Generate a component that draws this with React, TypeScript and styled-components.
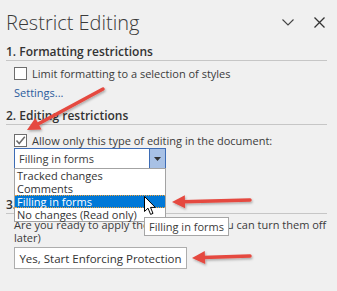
import styled, { createGlobalStyle } from 'styled-components';

const GlobalStyle = createGlobalStyle`
  html, body { margin: 0; padding: 0; background: #f0f0f0; }
`;

const Panel = styled.div`
  position: relative;
  width: 337px;
  height: 291px;
  overflow: hidden;
  background: #f0f0f0;
  color: #3b3b3b;
  font-family: "Open Sans", "Noto Sans", sans-serif;
  font-size: 11px;
`;

const Header = styled.header`
  display: flex;
  align-items: center;
  height: 44px;
  padding: 0 8px 0 6px;
`;

const Title = styled.h1`
  flex: 1;
  margin: 2px 0 0;
  font-size: 20px;
  font-weight: 300;
  line-height: 24px;
  color: #3a3a3a;
`;

const HeaderButton = styled.button`
  display: flex;
  align-items: center;
  justify-content: center;
  width: 20px;
  height: 20px;
  margin-left: 11px;
  padding: 0;
  border: 0;
  background: none;
  color: #444;
`;

const Section = styled.section<{ $gap?: number }>`
  padding: 0 10px 0 6px;
  margin-top: ${({ $gap }) => $gap ?? 0}px;
`;

const SectionTitle = styled.h2`
  margin: 0;
  font-size: 12px;
  font-weight: 600;
  line-height: 16px;
  color: #333;
  border-bottom: 1px solid #c6c6c6;
`;

const OptionRow = styled.label<{ $top: number; $height: number }>`
  display: flex;
  align-items: center;
  gap: 5px;
  height: ${({ $height }) => $height}px;
  margin-top: ${({ $top }) => $top}px;
  padding-left: 8px;
  white-space: nowrap;
`;

const Box = styled.span`
  display: flex;
  align-items: center;
  justify-content: center;
  box-sizing: border-box;
  width: 13px;
  height: 13px;
  border: 1px solid #6d6d6d;
  background: #fff;
`;

const Link = styled.a`
  display: block;
  padding-left: 8px;
  line-height: 16px;
  color: #2b5b9c;
  text-decoration: none;
`;

const Select = styled.div`
  position: relative;
  display: flex;
  box-sizing: border-box;
  width: 152px;
  height: 21px;
  margin: 1px 0 0 8px;
  border: 1px solid #3d6cb5;
  background: #fff;
`;

const SelectValue = styled.span`
  flex: 1;
  padding-left: 4px;
  line-height: 19px;
`;

const SelectButton = styled.span`
  display: flex;
  align-items: center;
  justify-content: center;
  width: 15px;
  border-left: 1px solid #3d6cb5;
  background: #a8c1e5;
`;

const List = styled.ul`
  position: absolute;
  top: 100%;
  left: -1px;
  z-index: 2;
  box-sizing: border-box;
  width: 152px;
  margin: 0;
  padding: 0;
  list-style: none;
  border: 1px solid #a3a3a3;
  background: #fff;
`;

const Item = styled.li<{ $active?: boolean }>`
  box-sizing: border-box;
  height: 13px;
  padding-left: 2px;
  line-height: 12px;
  white-space: nowrap;
  color: ${({ $active }) => ($active ? '#fff' : '#333')};
  background: ${({ $active }) => ($active ? '#0078d7' : 'transparent')};
  border: 1px ${({ $active }) => ($active ? 'dotted #f2a33a' : 'solid transparent')};
  border-left: 0;
  border-right: 0;
`;

const Paragraph = styled.p`
  margin: 4px 0 0;
  padding-left: 8px;
  line-height: 13px;
`;

const ActionButton = styled.button`
  display: block;
  box-sizing: border-box;
  width: 173px;
  height: 22px;
  margin: 3px 0 0 8px;
  padding: 0;
  border: 1px solid #adadad;
  background: #fff;
  color: #333;
  font: inherit;
  font-size: 11.5px;
`;

const Tooltip = styled.div`
  position: absolute;
  left: 144px;
  top: 217px;
  z-index: 3;
  box-sizing: border-box;
  width: 85px;
  height: 19px;
  padding-left: 4px;
  border: 1px solid #a6a6a6;
  background: #fff;
  line-height: 17px;
  white-space: nowrap;
`;

const Pointer = styled.svg`
  position: absolute;
  left: 144px;
  top: 196px;
  z-index: 4;
`;

const Marks = styled.svg`
  position: absolute;
  inset: 0;
  z-index: 5;
  pointer-events: none;
`;

function Arrow({ x1, y1, x2, y2 }: { x1: number; y1: number; x2: number; y2: number }) {
  const a = Math.atan2(y2 - y1, x2 - x1);
  const len = 13;
  const half = 6.5;
  const bx = x2 - Math.cos(a) * len;
  const by = y2 - Math.sin(a) * len;
  const px = -Math.sin(a) * half;
  const py = Math.cos(a) * half;
  return (
    <g filter="url(#soft)">
      <line x1={x1} y1={y1} x2={bx + Math.cos(a) * 2} y2={by + Math.sin(a) * 2} stroke="#e5493f" strokeWidth={3.5} strokeLinecap="round" />
      <polygon points={`${x2},${y2} ${bx + px},${by + py} ${bx - px},${by - py}`} fill="#e5493f" />
    </g>
  );
}

export default function App() {
  return (
    <Panel>
      <GlobalStyle />
      <Header>
        <Title>Restrict Editing</Title>
        <HeaderButton aria-label="Options">
          <svg width="12" height="7" viewBox="0 0 12 7">
            <path d="M0.5 0.5 L6 6 L11.5 0.5" fill="none" stroke="#444" strokeWidth="1.1" />
          </svg>
        </HeaderButton>
        <HeaderButton aria-label="Close">
          <svg width="11" height="11" viewBox="0 0 11 11">
            <path d="M0.5 0.5 L10.5 10.5 M10.5 0.5 L0.5 10.5" stroke="#333" strokeWidth="1.3" />
          </svg>
        </HeaderButton>
      </Header>

      <Section>
        <SectionTitle>1. Formatting restrictions</SectionTitle>
        <OptionRow $top={0} $height={24}>
          <Box />
          Limit formatting to a selection of styles
        </OptionRow>
        <Link>Settings...</Link>
      </Section>

      <Section $gap={7}>
        <SectionTitle>2. Editing restrictions</SectionTitle>
        <OptionRow $top={8} $height={14}>
          <Box>
            <svg width="11" height="11" viewBox="0 0 11 11">
              <path d="M1.5 5.5 L4.2 8.5 L9.8 1.8" fill="none" stroke="#6a6a6a" strokeWidth="1.5" />
            </svg>
          </Box>
          Allow only this type of editing in the document:
        </OptionRow>
        <Select>
          <SelectValue>Filling in forms</SelectValue>
          <SelectButton>
            <svg width="7" height="4" viewBox="0 0 7 4">
              <path d="M0 0 H7 L3.5 4 Z" fill="#333" />
            </svg>
          </SelectButton>
          <List>
            <Item>Tracked changes</Item>
            <Item>Comments</Item>
            <Item $active>Filling in forms</Item>
            <Item>No changes (Read only)</Item>
          </List>
        </Select>
      </Section>

      <Section $gap={28}>
        <SectionTitle>3. Start enforcement</SectionTitle>
        <Paragraph>Are you ready to apply these settings? (You can turn them off later)</Paragraph>
        <ActionButton>Yes, Start Enforcing Protection</ActionButton>
      </Section>

      <Tooltip>Filling in forms</Tooltip>

      <Pointer width="13" height="20" viewBox="0 0 13 20">
        <path d="M0.5 0.5 L0.5 15.5 L4 12.2 L6.6 18.4 L9 17.4 L6.5 11.4 L11.3 11.4 Z" fill="#fff" stroke="#000" strokeWidth="1" strokeLinejoin="round" />
      </Pointer>

      <Marks width="337" height="291" viewBox="0 0 337 291">
        <defs>
          <filter id="soft" x="-20%" y="-50%" width="140%" height="200%">
            <feDropShadow dx="1" dy="1.5" stdDeviation="1.2" floodColor="#000" floodOpacity="0.3" />
          </filter>
        </defs>
        <Arrow x1={103} y1={89} x2={27} y2={130} />
        <Arrow x1={250} y1={200} x2={172} y2={202} />
        <Arrow x1={250} y1={256} x2={192} y2={258} />
      </Marks>
    </Panel>
  );
}
